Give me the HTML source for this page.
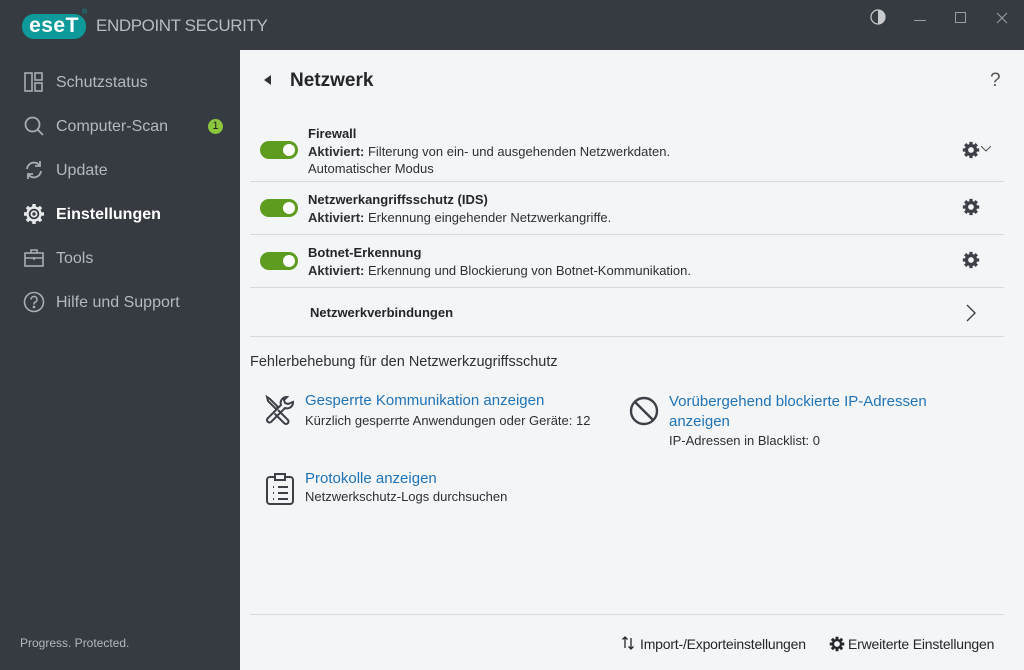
<!DOCTYPE html>
<html><head><meta charset="utf-8"><style>
*{margin:0;padding:0;box-sizing:border-box}
body{width:1024px;height:670px;overflow:hidden;background:#363a41;font-family:"Liberation Sans",sans-serif;position:relative;color:#2d3034}
.abs{position:absolute}
.logo{left:22px;top:14px;width:64px;height:25px;background:#0e9a9b;border-radius:12px;color:#fff;font-weight:bold;font-size:21px;line-height:24px;text-align:center;letter-spacing:0.5px}
.title{left:96px;top:16px;color:#b8bbbf;font-size:17px;letter-spacing:-0.4px}
.nav{left:0;width:240px;height:44px;color:#b5b8bc;font-size:16px}
.nav svg{position:absolute;left:24px;top:12px}
.nav .t{position:absolute;left:56px;top:14px}
.main{left:240px;top:50px;width:784px;height:620px;background:#f4f5f7}
.row{position:absolute;left:10px;width:754px;border-bottom:1px solid #d8d9db}
.tog{position:absolute;left:10px;width:38px;height:18px;border-radius:9px;background:#5e9c1f}
.tog:after{content:"";position:absolute;right:3px;top:3px;width:12px;height:12px;border-radius:50%;background:#fff}
.h{position:absolute;left:58px;font-weight:bold;font-size:13px;color:#23262a}
.d{position:absolute;left:58px;font-size:13px;color:#2d3034}
.link{color:#1f73b7;font-size:15px;position:absolute}
.sub{font-size:13px;position:absolute;color:#2d3034}
</style></head><body>
<div class="abs logo">eseT</div>
<div class="abs" style="left:82px;top:9px;font-size:7px;color:#0e9a9b">®</div>
<div class="abs title">ENDPOINT SECURITY</div>
<svg class="abs" style="left:870px;top:9px" width="16" height="16"><circle cx="8" cy="8" r="7" fill="none" stroke="#c8cacd" stroke-width="1.2"/><path d="M8 1a7 7 0 0 1 0 14z" fill="#c8cacd"/></svg>
<div class="abs" style="left:914px;top:20px;width:12px;height:1px;background:#9a9da1"></div>
<div class="abs" style="left:955px;top:12px;width:11px;height:11px;border:1px solid #9a9da1"></div>
<svg class="abs" style="left:996px;top:12px" width="12" height="12"><path d="M1 1L11 11M11 1L1 11" stroke="#9a9da1" stroke-width="1.1"/></svg>

<div class="abs nav" style="top:60px"><svg width="20" height="20" fill="none" stroke="#a9acb0" stroke-width="1.6"><rect x="1" y="1" width="7" height="18"/><rect x="11" y="1" width="7" height="7"/><rect x="11" y="11" width="7" height="8"/></svg><span class="t">Schutzstatus</span></div>
<div class="abs nav" style="top:104px"><svg width="20" height="20" fill="none" stroke="#a9acb0" stroke-width="1.8"><circle cx="8.5" cy="8.5" r="7"/><path d="M13.5 13.5L19 19"/></svg><span class="t">Computer-Scan</span>
<div class="abs" style="left:208px;top:15px;width:15px;height:15px;border-radius:50%;background:#8cc63f;color:#1a1a1a;font-size:11px;text-align:center;line-height:15px">1</div></div>
<div class="abs nav" style="top:148px"><svg width="20" height="20" fill="none" stroke="#a9acb0" stroke-width="1.8"><path d="M3 9a7 7 0 0 1 13-3M17 11a7 7 0 0 1-13 3"/><path d="M16 1v5h-5M4 19v-5h5"/></svg><span class="t">Update</span></div>
<div class="abs nav" style="top:192px;color:#fff;font-weight:bold"><svg width="22" height="22" viewBox="0 0 22 22" style="left:23px;top:11px"><g fill="none" stroke="#e8e9ea" stroke-width="2.4"><circle cx="11" cy="11" r="6.5"/><circle cx="11" cy="11" r="2.6" stroke-width="1.8"/></g><g stroke="#e8e9ea" stroke-width="3.4"><path d="M11 1v3M11 18v3M1 11h3M18 11h3M3.9 3.9l2.1 2.1M16 16l2.1 2.1M3.9 18.1L6 16M16 6l2.1-2.1"/></g></svg><span class="t">Einstellungen</span></div>
<div class="abs nav" style="top:236px"><svg width="20" height="20" fill="none" stroke="#a9acb0" stroke-width="1.6"><rect x="1" y="5" width="18" height="13"/><path d="M7 5V2h6v3M1 10h18M10 9v3"/></svg><span class="t">Tools</span></div>
<div class="abs nav" style="top:280px"><svg width="22" height="22" fill="none" stroke="#a9acb0" stroke-width="1.6" style="left:23px;top:11px"><circle cx="11" cy="11" r="9.5"/><path d="M8 8.5a3 3 0 1 1 4 2.8c-1 .4-1 1-1 2.2"/><circle cx="11" cy="16" r=".6" fill="#a9acb0"/></svg><span class="t">Hilfe und Support</span></div>
<div class="abs" style="left:20px;top:636px;color:#b5b8bc;font-size:12px">Progress. Protected.</div>

<div class="abs main">
<svg class="abs" style="left:24px;top:25px" width="8" height="10"><path d="M7 0v10L0 5z" fill="#2d3034"/></svg>
<div class="abs" style="left:50px;top:20px;font-size:19px;font-weight:bold;color:#23262a">Netzwerk</div>
<div class="abs" style="left:750px;top:20px;font-size:19px;color:#555">?</div>

<div class="row" style="top:70px;height:62px"><div class="tog" style="top:21px"></div><div class="h" style="top:6px">Firewall</div><div class="d" style="top:24px"><b>Aktiviert:</b> Filterung von ein- und ausgehenden Netzwerkdaten.</div><div class="d" style="top:41px">Automatischer Modus</div>
<svg class="abs" style="left:712px;top:21px" width="18" height="18" viewBox="0 0 22 22"><g fill="none" stroke="#3d4147" stroke-width="4"><circle cx="11" cy="11" r="5.5"/></g><g stroke="#3d4147" stroke-width="4"><path d="M11 1v4M11 17v4M1 11h4M17 11h4M3.9 3.9l2.8 2.8M15.3 15.3l2.8 2.8M3.9 18.1l2.8-2.8M15.3 6.7l2.8-2.8"/></g></svg>
<svg class="abs" style="left:731px;top:26px" width="10" height="6"><path d="M0 0l5 5 5-5" fill="none" stroke="#555" stroke-width="1"/></svg></div>

<div class="row" style="top:132px;height:53px"><div class="tog" style="top:17px"></div><div class="h" style="top:10px">Netzwerkangriffsschutz (IDS)</div><div class="d" style="top:28px"><b>Aktiviert:</b> Erkennung eingehender Netzwerkangriffe.</div>
<svg class="abs" style="left:712px;top:16px" width="18" height="18" viewBox="0 0 22 22"><g fill="none" stroke="#3d4147" stroke-width="4"><circle cx="11" cy="11" r="5.5"/></g><g stroke="#3d4147" stroke-width="4"><path d="M11 1v4M11 17v4M1 11h4M17 11h4M3.9 3.9l2.8 2.8M15.3 15.3l2.8 2.8M3.9 18.1l2.8-2.8M15.3 6.7l2.8-2.8"/></g></svg></div>

<div class="row" style="top:185px;height:53px"><div class="tog" style="top:17px"></div><div class="h" style="top:10px">Botnet-Erkennung</div><div class="d" style="top:28px"><b>Aktiviert:</b> Erkennung und Blockierung von Botnet-Kommunikation.</div>
<svg class="abs" style="left:712px;top:16px" width="18" height="18" viewBox="0 0 22 22"><g fill="none" stroke="#3d4147" stroke-width="4"><circle cx="11" cy="11" r="5.5"/></g><g stroke="#3d4147" stroke-width="4"><path d="M11 1v4M11 17v4M1 11h4M17 11h4M3.9 3.9l2.8 2.8M15.3 15.3l2.8 2.8M3.9 18.1l2.8-2.8M15.3 6.7l2.8-2.8"/></g></svg></div>

<div class="row" style="top:238px;height:49px"><div class="h" style="left:60px;top:17px">Netzwerkverbindungen</div>
<svg class="abs" style="left:716px;top:16px" width="10" height="18"><path d="M1 1l8 8-8 8" fill="none" stroke="#3d4147" stroke-width="1.4"/></svg></div>

<div class="abs" style="left:10px;top:304px;font-size:14.5px;color:#2d3034">Fehlerbehebung für den Netzwerkzugriffsschutz</div>

<svg class="abs" style="left:24px;top:345px" width="32" height="32" fill="none" stroke="#3d4147" stroke-width="2"><path d="M3 2l3 2 8 8-2 2-8-8z"/><path d="M14 15l10 10a2.5 2.5 0 0 1-3.5 3.5L10.5 18.5"/><path d="M29 7a6 6 0 0 1-8 6L7 27a2.5 2.5 0 0 1-3.5-3.5L17 10a6 6 0 0 1 6-8l-3 3 1 3 3 1z"/></svg>
<div class="link" style="left:65px;top:342px">Gesperrte Kommunikation anzeigen</div>
<div class="sub" style="left:65px;top:363px">Kürzlich gesperrte Anwendungen oder Geräte: 12</div>

<svg class="abs" style="left:388px;top:345px" width="32" height="32" fill="none" stroke="#3d4147" stroke-width="2.4"><circle cx="16" cy="16" r="13"/><path d="M7 7l18 18"/></svg>
<div class="link" style="left:429px;top:342px;line-height:20px">Vorübergehend blockierte IP-Adressen<br>anzeigen</div>
<div class="sub" style="left:429px;top:383px">IP-Adressen in Blacklist: 0</div>

<svg class="abs" style="left:24px;top:422px" width="32" height="34" fill="none" stroke="#3d4147" stroke-width="2"><rect x="3" y="5" width="26" height="27" rx="3"/><path d="M11 2h10v6H11z" fill="#f4f5f7"/><path d="M9 15h1M14 15h10M9 21h1M14 21h10M9 27h1M14 27h10"/></svg>
<div class="link" style="left:65px;top:420px">Protokolle anzeigen</div>
<div class="sub" style="left:65px;top:439px">Netzwerkschutz-Logs durchsuchen</div>

<div class="abs" style="left:10px;top:564px;width:754px;height:1px;background:#d8d9db"></div>
<svg class="abs" style="left:381px;top:585px" width="14" height="16" fill="none" stroke="#23262a" stroke-width="1.3"><path d="M4 13V2M1.5 4.5L4 2l2.5 2.5M10 3v11M7.5 11.5L10 14l2.5-2.5"/></svg>
<div class="abs" style="left:400px;top:586px;font-size:14px;color:#23262a;letter-spacing:-0.2px">Import-/Exporteinstellungen</div>
<svg class="abs" style="left:589px;top:586px" width="16" height="16" viewBox="0 0 22 22"><g fill="none" stroke="#23262a" stroke-width="3"><circle cx="11" cy="11" r="5.5"/></g><g stroke="#23262a" stroke-width="4"><path d="M11 1v4M11 17v4M1 11h4M17 11h4M3.9 3.9l2.8 2.8M15.3 15.3l2.8 2.8M3.9 18.1l2.8-2.8M15.3 6.7l2.8-2.8"/></g></svg>
<div class="abs" style="left:608px;top:586px;font-size:14px;color:#23262a;letter-spacing:-0.2px">Erweiterte Einstellungen</div>
</div>
</body></html>
